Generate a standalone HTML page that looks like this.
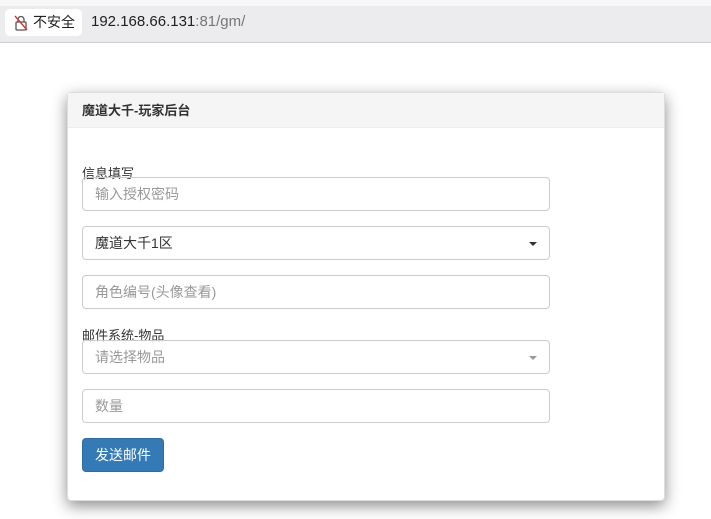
<!DOCTYPE html>
<html><head><meta charset="utf-8"><style>
*{box-sizing:border-box;margin:0;padding:0}
body{width:711px;height:519px;background:#fff;font-family:"Liberation Sans","Noto Sans CJK SC",sans-serif;position:relative;overflow:hidden}
.top{position:absolute;left:0;top:0;width:711px;height:43px;background:#ececef;border-bottom:1px solid #d0d0d3}
.top .strip{position:absolute;left:0;top:0;width:711px;height:6px;background:#f7f7f8}
.sec{position:absolute;left:5px;top:9px;width:77px;height:27px;background:#fff;border-radius:5px;font-size:14px;color:#222;line-height:27px;padding-left:28px}
.url{position:absolute;left:91px;top:13px;font-size:15px;color:#202124}
.url span{color:#777}
.card{position:absolute;left:67px;top:92px;width:598px;height:409px;background:#fff;border:1px solid #ddd;border-radius:4px;box-shadow:0 5px 15px rgba(0,0,0,.45)}
.hd{height:35px;background:#f5f5f5;border-bottom:1px solid #eee;font-size:13px;font-weight:bold;color:#333;line-height:35px;padding-left:14px}
.lbl{position:absolute;left:14px;font-size:13px;color:#333}
.in{position:absolute;left:14px;width:468px;height:34px;border:1px solid #ccc;border-radius:4px;font-size:14px;color:#999;line-height:32px;padding-left:12px}
.sel{color:#333}
.caret{position:absolute;right:12px;top:15px;border-left:4px solid transparent;border-right:4px solid transparent;border-top:4px solid #333}
.btn{position:absolute;left:14px;top:345px;width:82px;height:34px;background:#337ab7;border:1px solid #2e6da4;border-radius:4px;color:#fff;font-size:14px;line-height:32px;text-align:center}
</style></head><body>
<div class="top"><div class="strip"></div>
<div class="sec"><svg style="position:absolute;left:9px;top:6px" width="14" height="16" viewBox="0 0 14 16"><path d="M4 7V4.5a3 3 0 0 1 6 0V7" fill="none" stroke="#555" stroke-width="1.3"/><rect x="2" y="7" width="10" height="8" rx="1" fill="none" stroke="#555" stroke-width="1.3"/><path d="M1 1L13 15" stroke="#d33" stroke-width="1.4"/></svg>不安全</div>
<div class="url">192.168.66.131<span>:81/gm/</span></div></div>
<div class="card">
<div class="hd">魔道大千-玩家后台</div>
<div class="lbl" style="top:70px">信息填写</div>
<div class="in" style="top:84px">输入授权密码</div>
<div class="in sel" style="top:133px">魔道大千1区<div class="caret"></div></div>
<div class="in" style="top:182px">角色编号(头像查看)</div>
<div class="lbl" style="top:232px">邮件系统-物品</div>
<div class="in" style="top:247px">请选择物品<div class="caret" style="border-top-color:#999"></div></div>
<div class="in" style="top:296px">数量</div>
<div class="btn">发送邮件</div>
</div>
</body></html>
